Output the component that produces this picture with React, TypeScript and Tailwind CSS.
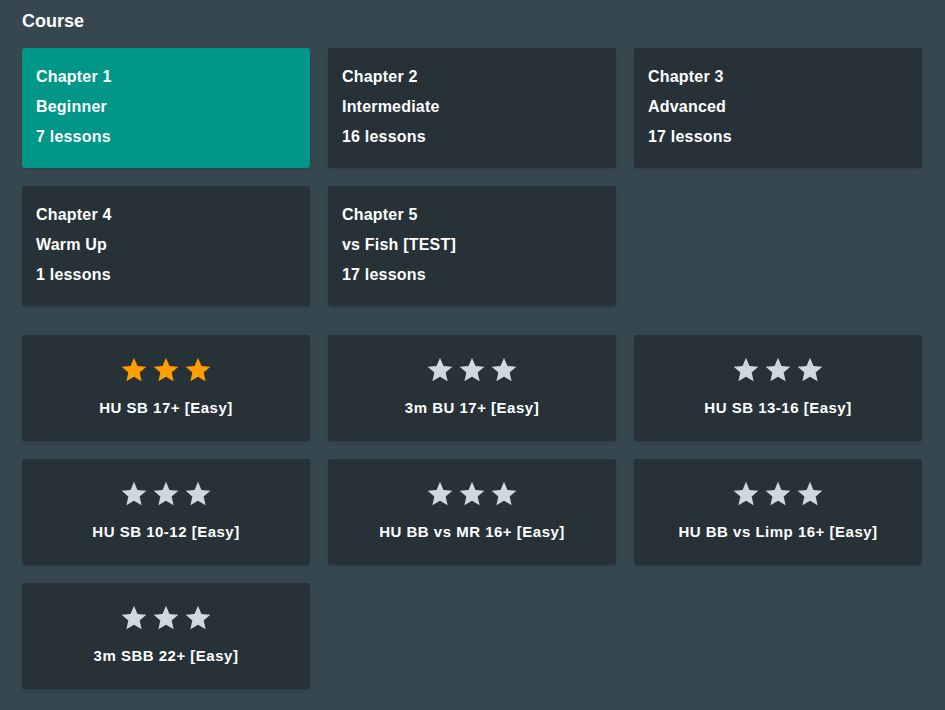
const chapters = [
  { no: 1, name: "Beginner", lessons: 7, active: true },
  { no: 2, name: "Intermediate", lessons: 16 },
  { no: 3, name: "Advanced", lessons: 17 },
  { no: 4, name: "Warm Up", lessons: 1 },
  { no: 5, name: "vs Fish [TEST]", lessons: 17 },
];

const drills = [
  { title: "HU SB 17+ [Easy]", stars: 3 },
  { title: "3m BU 17+ [Easy]", stars: 0 },
  { title: "HU SB 13-16 [Easy]", stars: 0 },
  { title: "HU SB 10-12 [Easy]", stars: 0 },
  { title: "HU BB vs MR 16+ [Easy]", stars: 0 },
  { title: "HU BB vs Limp 16+ [Easy]", stars: 0 },
  { title: "3m SBB 22+ [Easy]", stars: 0 },
];

function Star({ filled }: { filled: boolean }) {
  return (
    <svg width="26" height="25" viewBox="1.5 1.5 21 20">
      <path
        d="M12 17.27L18.18 21l-1.64-7.03L22 9.24l-7.19-.61L12 2 9.19 8.63 2 9.24l5.46 4.73L5.82 21z"
        fill={filled ? "#ffa000" : "#cfd8dc"}
      />
    </svg>
  );
}

export default function App() {
  return (
    <div
      className="min-h-screen bg-[#37474f] px-[22px] pb-6 pt-[9px] text-white"
      style={{ fontFamily: '"Liberation Sans", Arial, sans-serif' }}
    >
      <h1 className="mb-[15px] text-[18px] font-bold leading-[24px]">Course</h1>

      <div className="grid w-[900px] grid-cols-3 gap-[18px]">
        {chapters.map((c) => (
          <div
            key={c.no}
            className={`h-[120px] rounded-[3px] px-[14px] pt-[14px] text-[16px] font-bold leading-[30px] tracking-[0.2px] shadow-sm ${
              c.active ? "bg-[#009688]" : "bg-[#263238]"
            }`}
          >
            <div>Chapter {c.no}</div>
            <div>{c.name}</div>
            <div>{c.lessons} lessons</div>
          </div>
        ))}
      </div>

      <div className="mt-[29px] grid w-[900px] grid-cols-3 gap-[18px]">
        {drills.map((d) => (
          <div
            key={d.title}
            className="flex h-[106px] flex-col items-center rounded-[3px] bg-[#263238] pt-[22px] shadow-sm"
          >
            <div className="flex h-[25px] gap-[6px]">
              {[0, 1, 2].map((i) => (
                <Star key={i} filled={i < d.stars} />
              ))}
            </div>
            <div className="mt-4 text-[15px] font-bold leading-[20px] tracking-[0.5px]">{d.title}</div>
          </div>
        ))}
      </div>
    </div>
  );
}
